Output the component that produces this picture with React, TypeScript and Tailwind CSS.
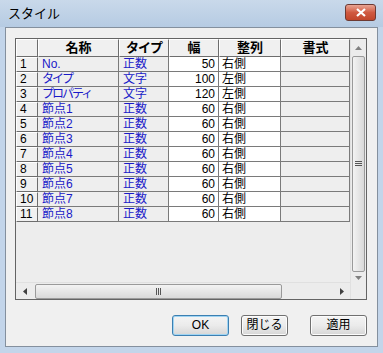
import React from "react"

type Row = { name: string; type: string; width: number; align: string; kana?: boolean }

const rows: Row[] = [
  { name: "No.", type: "正数", width: 50, align: "右側" },
  { name: "タイプ", type: "文字", width: 100, align: "左側", kana: true },
  { name: "プロパティ", type: "文字", width: 120, align: "左側", kana: true },
  { name: "節点1", type: "正数", width: 60, align: "右側" },
  { name: "節点2", type: "正数", width: 60, align: "右側" },
  { name: "節点3", type: "正数", width: 60, align: "右側" },
  { name: "節点4", type: "正数", width: 60, align: "右側" },
  { name: "節点5", type: "正数", width: 60, align: "右側" },
  { name: "節点6", type: "正数", width: 60, align: "右側" },
  { name: "節点7", type: "正数", width: 60, align: "右側" },
  { name: "節点8", type: "正数", width: 60, align: "右側" },
]

const font = { fontFamily: '"Liberation Sans", "Noto Sans CJK JP", sans-serif' }

const headCell =
  "flex items-center justify-center font-bold text-[13px] leading-[16px] text-black bg-[#f0f0f0] border-t border-l border-t-white border-l-white border-r border-b border-r-[#6d6d6d] border-b-[#6d6d6d] h-[18px]"

const cell = "flex items-center h-[15px] border-r border-b border-[#7a7a7a] text-[12px] leading-[14px] whitespace-nowrap"

function Button({ label, primary }: { label: string; primary?: boolean }) {
  return (
    <div
      className={`flex items-center justify-center h-[21px] rounded-[3px] border text-[12px] leading-[19px] text-black bg-gradient-to-b from-[#f4f4f4] via-[#ebebeb] to-[#d6d6d6] ${
        primary ? "border-[#3c7fb1] shadow-[inset_0_0_0_1px_#9fd4f3]" : "border-[#707070] shadow-[inset_0_0_0_1px_#fcfcfc]"
      }`}
    >
      {label}
    </div>
  )
}

export default function App() {
  return (
    <div className="w-[383px] h-[353px] bg-[#c3d5ea] flex flex-col overflow-hidden" style={font}>
      {/* title bar */}
      <div className="h-[27px] flex items-center justify-between pl-[8px] pr-[7px] bg-gradient-to-b from-[#c9d9ea] to-[#b6cbe3]">
        <span className="text-[13px] text-black leading-[18px]">スタイル</span>
        <div className="w-[31px] h-[17px] rounded-[3px] border border-[#6d3a33] bg-gradient-to-b from-[#e8a493] via-[#d05a41] to-[#c1452a] flex items-center justify-center mt-[-2px]">
          <svg width="10" height="9" viewBox="0 0 10 9">
            <path d="M1 1 L9 8 M9 1 L1 8" stroke="#fff" strokeWidth="2.2" />
          </svg>
        </div>
      </div>

      {/* client area */}
      <div className="flex-1 mx-[5px] mb-[6px] bg-[#f0f0f0] border border-[#84909e] flex flex-col">
        <div className="ml-[9px] mt-[10px] w-[352px] h-[262px] border border-[#646464] flex bg-[#ededed]">
          <div className="w-[334px] flex flex-col">
            <div className="flex-1 flex flex-col">
              <div className="flex">
                <div className={`${headCell} w-[22px]`} />
                <div className={`${headCell} w-[81px]`}>名称</div>
                <div className={`${headCell} w-[50px] tracking-[-1px]`}>タイプ</div>
                <div className={`${headCell} w-[50px]`}>幅</div>
                <div className={`${headCell} w-[62px]`}>整列</div>
                <div className={`${headCell} w-[69px]`}>書式</div>
              </div>
              {rows.map((r, i) => (
                <div key={i} className="flex">
                  <div className="w-[22px] h-[15px] flex items-center pl-[3px] text-[12px] leading-[13px] bg-[#f0f0f0] border-t border-l border-t-white border-l-white border-r border-b border-r-[#6d6d6d] border-b-[#6d6d6d]">
                    {i + 1}
                  </div>
                  <div className={`${cell} w-[81px] pl-[4px] bg-[#eeeeee] text-[#1a1ac8] ${r.kana ? "tracking-[-2px]" : ""}`}>{r.name}</div>
                  <div className={`${cell} w-[50px] pl-[4px] bg-[#eeeeee] text-[#1a1ac8]`}>{r.type}</div>
                  <div className={`${cell} w-[50px] justify-end pr-[3px] bg-white text-black`}>{r.width}</div>
                  <div className={`${cell} w-[62px] pl-[3px] bg-white text-black`}>{r.align}</div>
                  <div className={`${cell} w-[69px] bg-[#eeeeee]`} />
                </div>
              ))}
            </div>
            {/* horizontal scrollbar */}
            <div className="h-[17px] flex items-center bg-[#ececec] border-t border-[#e0e0e0]">
              <div className="w-[17px] h-[17px] flex items-center justify-center">
                <svg width="4" height="7" viewBox="0 0 4 7"><path d="M4 0 L0 3.5 L4 7 Z" fill="#404040" /></svg>
              </div>
              <div className="w-[247px] h-[15px] ml-[2px] rounded-[2px] border border-[#9a9a9a] bg-gradient-to-b from-[#f3f3f3] to-[#d9d9d9] flex items-center justify-center">
                <svg width="6" height="7" viewBox="0 0 6 7"><path d="M0.5 0 V7 M2.5 0 V7 M4.5 0 V7" stroke="#555" strokeWidth="1" /></svg>
              </div>
              <div className="flex-1" />
              <div className="w-[17px] h-[17px] flex items-center justify-center">
                <svg width="4" height="7" viewBox="0 0 4 7"><path d="M0 0 L4 3.5 L0 7 Z" fill="#404040" /></svg>
              </div>
            </div>
          </div>
          {/* vertical scrollbar */}
          <div className="w-[16px] flex flex-col bg-[#ececec] border-l border-[#e0e0e0]">
            <div className="h-[17px] flex items-center justify-center">
              <svg width="7" height="4" viewBox="0 0 7 4"><path d="M0 4 L3.5 0 L7 4 Z" fill="#808080" /></svg>
            </div>
            <div className="h-[216px] mx-[1px] rounded-[2px] border border-[#9a9a9a] bg-gradient-to-r from-[#f3f3f3] to-[#d9d9d9] flex items-center justify-center">
              <svg width="7" height="6" viewBox="0 0 7 6"><path d="M0 0.5 H7 M0 2.5 H7 M0 4.5 H7" stroke="#555" strokeWidth="1" /></svg>
            </div>
            <div className="h-[11px] flex items-center justify-center">
              <svg width="7" height="4" viewBox="0 0 7 4"><path d="M0 0 L3.5 4 L7 0 Z" fill="#808080" /></svg>
            </div>
            <div className="flex-1 bg-[#ececec]" />
          </div>
        </div>

        {/* buttons */}
        <div className="flex mt-[15px] ml-[166px]">
          <div className="w-[57px]"><Button label="OK" primary /></div>
          <div className="w-[47px] ml-[12px]"><Button label="閉じる" /></div>
          <div className="w-[57px] ml-[22px]"><Button label="適用" /></div>
        </div>
      </div>
    </div>
  )
}
